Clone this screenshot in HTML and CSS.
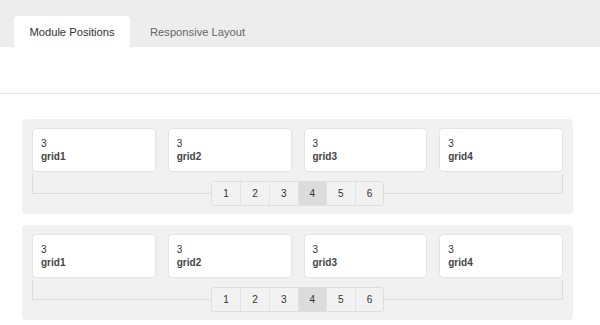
FILE: index.html
```html
<!DOCTYPE html>
<html lang="en">
<head>
  <meta charset="UTF-8">
  <title>Module Positions</title>
  <link rel="stylesheet" href="styles.css">
</head>
<body>
  <nav class="tabs">
    <a class="tab active">Module Positions</a>
    <a class="tab">Responsive Layout</a>
  </nav>
  <div class="toolbar"></div>

  <section class="layouts">
    <div class="panel">
      <div class="cards">
        <div class="card"><span>3</span><strong>grid1</strong></div>
        <div class="card"><span>3</span><strong>grid2</strong></div>
        <div class="card"><span>3</span><strong>grid3</strong></div>
        <div class="card"><span>3</span><strong>grid4</strong></div>
      </div>
      <div class="track">
        <div class="pager">
          <button>1</button><button>2</button><button>3</button><button class="on">4</button><button>5</button><button>6</button>
        </div>
      </div>
    </div>
    <div class="panel">
      <div class="cards">
        <div class="card"><span>3</span><strong>grid1</strong></div>
        <div class="card"><span>3</span><strong>grid2</strong></div>
        <div class="card"><span>3</span><strong>grid3</strong></div>
        <div class="card"><span>3</span><strong>grid4</strong></div>
      </div>
      <div class="track">
        <div class="pager">
          <button>1</button><button>2</button><button>3</button><button class="on">4</button><button>5</button><button>6</button>
        </div>
      </div>
    </div>
  </section>
</body>
</html>
```

FILE: styles.css
```css
body {
  margin: 0;
  font-family: "Liberation Sans", Arial, sans-serif;
  background-color: #fff;
  color: #333;
}
.tabs {
  display: flex;
  align-items: flex-end;
  height: 47px;
  padding-left: 14px;
  background-color: #ededed;
  box-sizing: border-box;
}
.tab {
  display: flex;
  align-items: center;
  height: 31px;
  padding-left: 20px;
  font-size: 11.2px;
  color: #666;
  border-radius: 3px 3px 0 0;
}
.tab.active {
  justify-content: center;
  width: 116px;
  padding: 0;
  background-color: #fff;
  color: #333;
}
.toolbar {
  height: 46px;
  border-bottom: 1px solid #e6e6e6;
}
.layouts {
  display: flex;
  flex-direction: column;
  gap: 11px;
  padding: 25px 27px 0 22px;
}
.panel {
  background-color: #f1f1f1;
  border-radius: 4px;
  padding: 9px 10px 20px;
}
.cards {
  display: grid;
  grid-template-columns: repeat(4, 1fr);
  gap: 12px;
}
.card {
  display: flex;
  flex-direction: column;
  justify-content: center;
  height: 44px;
  padding: 0 8px;
  background-color: #fff;
  border: 1px solid #e4e4e4;
  border-radius: 4px;
  box-sizing: border-box;
  font-size: 10px;
  line-height: 13px;
  color: #333;
}
.card strong {
  color: #444;
}
.track {
  display: flex;
  justify-content: center;
  height: 19px;
  margin-top: 2px;
  border: 1px solid #dcdcdc;
  border-top: none;
}
.pager {
  display: flex;
  height: 23px;
  margin-top: 7px;
  border: 1px solid #dedede;
  border-radius: 3px;
  overflow: hidden;
  background-color: #f2f2f2;
}
.pager button {
  width: 28.6px;
  padding: 0;
  border: none;
  border-left: 1px solid #e2e2e2;
  background-color: #f2f2f2;
  font-family: inherit;
  font-size: 10px;
  color: #333;
}
.pager button:first-child {
  border-left: none;
}
.pager button.on {
  background-color: #dcdcdc;
}
```
